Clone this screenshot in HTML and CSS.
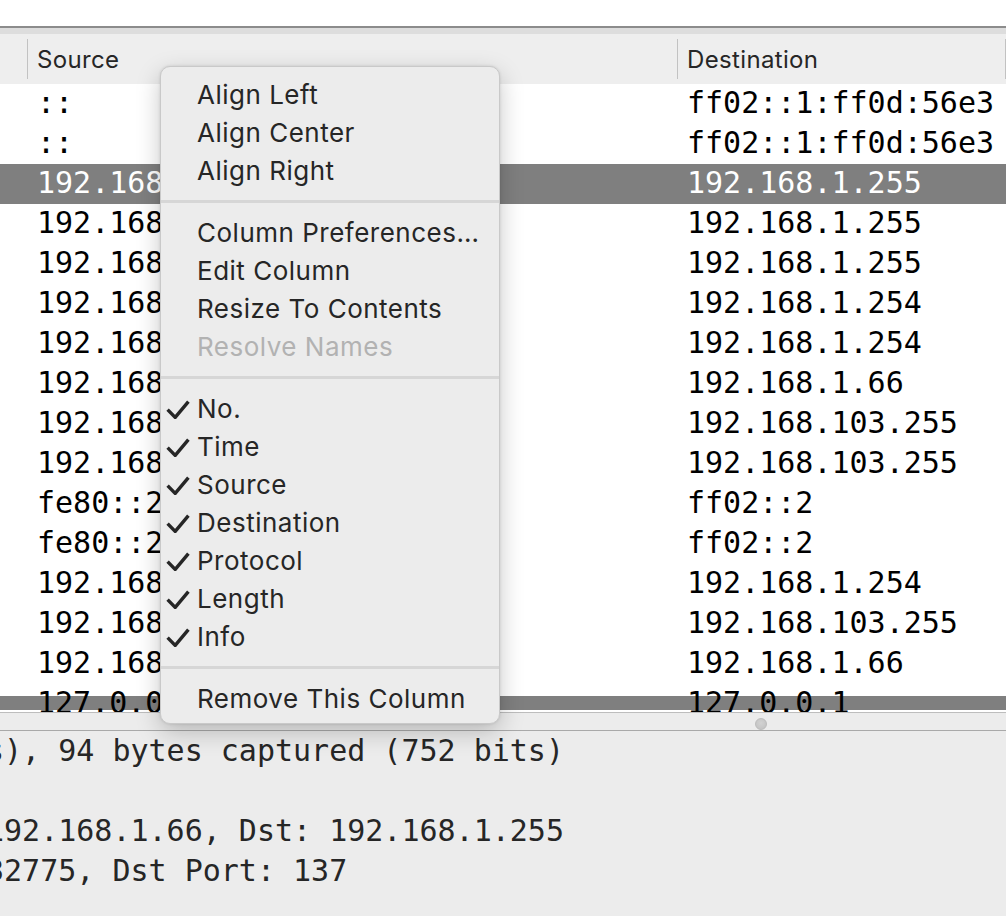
FILE: index.html
```html
<!DOCTYPE html>
<html>
<head>
<meta charset="utf-8">
<link rel="stylesheet" href="styles.css">
</head>
<body>
<div class="app">
  <div class="topspace"></div>
  <div class="packet-list">
    <div class="list-top"></div>
    <div class="header">
      <div class="hcell c0"></div>
      <div class="hsep"></div>
      <div class="hcell src">Source</div>
      <div class="hsep"></div>
      <div class="hcell dst">Destination</div>
      <div class="hsep"></div>
    </div>
    <div class="rows">
      <div class="row"><span class="c0"></span><span class="src">::</span><span class="dst">ff02::1:ff0d:56e3</span></div>
      <div class="row"><span class="c0"></span><span class="src">::</span><span class="dst">ff02::1:ff0d:56e3</span></div>
      <div class="row selected"><span class="c0"></span><span class="src">192.168.1.66</span><span class="dst">192.168.1.255</span></div>
      <div class="row"><span class="c0"></span><span class="src">192.168.1.66</span><span class="dst">192.168.1.255</span></div>
      <div class="row"><span class="c0"></span><span class="src">192.168.1.66</span><span class="dst">192.168.1.255</span></div>
      <div class="row"><span class="c0"></span><span class="src">192.168.1.66</span><span class="dst">192.168.1.254</span></div>
      <div class="row"><span class="c0"></span><span class="src">192.168.1.66</span><span class="dst">192.168.1.254</span></div>
      <div class="row"><span class="c0"></span><span class="src">192.168.1.254</span><span class="dst">192.168.1.66</span></div>
      <div class="row"><span class="c0"></span><span class="src">192.168.103.1</span><span class="dst">192.168.103.255</span></div>
      <div class="row"><span class="c0"></span><span class="src">192.168.103.1</span><span class="dst">192.168.103.255</span></div>
      <div class="row"><span class="c0"></span><span class="src">fe80::2</span><span class="dst">ff02::2</span></div>
      <div class="row"><span class="c0"></span><span class="src">fe80::2</span><span class="dst">ff02::2</span></div>
      <div class="row"><span class="c0"></span><span class="src">192.168.1.66</span><span class="dst">192.168.1.254</span></div>
      <div class="row"><span class="c0"></span><span class="src">192.168.103.1</span><span class="dst">192.168.103.255</span></div>
      <div class="row"><span class="c0"></span><span class="src">192.168.1.254</span><span class="dst">192.168.1.66</span></div>
      <div class="row last"><span class="c0"></span><span class="src">127.0.0.1</span><span class="dst">127.0.0.1</span></div>
    </div>
  </div>
  <div class="splitter"><span class="handle"></span></div>
  <div class="details">
    <div class="dlines">
      <div class="dline">s), 94 bytes captured (752 bits)</div>
      <div class="dline">&nbsp;</div>
      <div class="dline">192.168.1.66, Dst: 192.168.1.255</div>
      <div class="dline">32775, Dst Port: 137</div>
    </div>
  </div>

  <div class="menu">
    <div class="item"><span class="gutter"></span>Align Left</div>
    <div class="item"><span class="gutter"></span>Align Center</div>
    <div class="item"><span class="gutter"></span>Align Right</div>
    <div class="sep"></div>
    <div class="item"><span class="gutter"></span>Column Preferences…</div>
    <div class="item"><span class="gutter"></span>Edit Column</div>
    <div class="item"><span class="gutter"></span>Resize To Contents</div>
    <div class="item disabled"><span class="gutter"></span>Resolve Names</div>
    <div class="sep"></div>
    <div class="item"><span class="gutter"><svg class="check" width="24" height="19" viewBox="0 0 24 19"><path d="M1.6 9.6 L9.2 17.4 L22.4 1.6" /></svg></span>No.</div>
    <div class="item"><span class="gutter"><svg class="check" width="24" height="19" viewBox="0 0 24 19"><path d="M1.6 9.6 L9.2 17.4 L22.4 1.6" /></svg></span>Time</div>
    <div class="item"><span class="gutter"><svg class="check" width="24" height="19" viewBox="0 0 24 19"><path d="M1.6 9.6 L9.2 17.4 L22.4 1.6" /></svg></span>Source</div>
    <div class="item"><span class="gutter"><svg class="check" width="24" height="19" viewBox="0 0 24 19"><path d="M1.6 9.6 L9.2 17.4 L22.4 1.6" /></svg></span>Destination</div>
    <div class="item"><span class="gutter"><svg class="check" width="24" height="19" viewBox="0 0 24 19"><path d="M1.6 9.6 L9.2 17.4 L22.4 1.6" /></svg></span>Protocol</div>
    <div class="item"><span class="gutter"><svg class="check" width="24" height="19" viewBox="0 0 24 19"><path d="M1.6 9.6 L9.2 17.4 L22.4 1.6" /></svg></span>Length</div>
    <div class="item"><span class="gutter"><svg class="check" width="24" height="19" viewBox="0 0 24 19"><path d="M1.6 9.6 L9.2 17.4 L22.4 1.6" /></svg></span>Info</div>
    <div class="sep"></div>
    <div class="item"><span class="gutter"></span>Remove This Column</div>
  </div>
</div>
</body>
</html>
```

FILE: styles.css
```css
* { box-sizing: border-box; }
html, body {
  margin: 0;
  padding: 0;
  background: #ffffff;
}
body {
  width: 1006px;
  height: 916px;
  overflow: hidden;
}
.app {
  position: relative;
  width: 1006px;
  height: 916px;
  overflow: hidden;
  display: flex;
  flex-direction: column;
}
.topspace {
  height: 26px;
  background: #ffffff;
  flex: none;
}
.packet-list {
  flex: none;
}
.list-top {
  height: 8px;
  border-top: 2px solid #8c8c8c;
  background: #dddddd;
}
.header {
  height: 50px;
  background: #eeeeee;
  display: flex;
  align-items: center;
  font-family: "Inter", "Liberation Sans", sans-serif;
  font-size: 24px;
  letter-spacing: 0.35px;
  color: #262626;
}
.hcell {
  white-space: nowrap;
  overflow: hidden;
}
.hsep {
  width: 1px;
  height: 40px;
  background: #c2c2c2;
  flex: none;
}
.header .c0 { width: 27px; flex: none; }
.header .src { width: 649px; padding-left: 9px; flex: none; }
.header .dst { width: 327px; padding-left: 9px; flex: none; }

.rows {
  height: 628px;
  overflow: hidden;
  background: #ffffff;
  font-family: "DejaVu Sans Mono", "Liberation Mono", monospace;
  font-size: 30px;
  color: #000000;
}
.row {
  height: 40px;
  line-height: 37px;
  display: flex;
  white-space: nowrap;
}
.row .c0 { width: 27px; flex: none; }
.row .src { width: 650px; padding-left: 10px; flex: none; overflow: hidden; }
.row .dst { width: 329px; padding-left: 10px; flex: none; overflow: hidden; }
.row.selected {
  background: #7f7f7f;
  color: #ffffff;
}
.row.last {
  background: linear-gradient(to bottom, #ffffff 0, #ffffff 12px, #7f7f7f 12px, #7f7f7f 26px, #ffffff 26px);
}

.splitter {
  flex: none;
  height: 19px;
  border-top: 1px solid #bdbdbd;
  border-bottom: 1px solid #a9a9a9;
  background: #ececec;
  padding-left: 755px;
  padding-top: 5px;
}
.handle {
  display: block;
  width: 12px;
  height: 12px;
  border-radius: 50%;
  background: radial-gradient(circle at 50% 40%, #d2d2d2, #c0c0c0);
  border: 1px solid #bcbcbc;
}

.details {
  flex: 1;
  background: #ececec;
  overflow: hidden;
  font-family: "DejaVu Sans Mono", "Liberation Mono", monospace;
  font-size: 30px;
  color: #262626;
}
.dlines {
  margin-left: -14px;
}
.dline {
  height: 40px;
  line-height: 40px;
  white-space: nowrap;
}

.menu {
  position: absolute;
  left: 160px;
  top: 66px;
  width: 340px;
  height: 658px;
  background: #ececec;
  border: 1px solid #c9c9c9;
  border-radius: 10px;
  box-shadow: 0 8px 24px rgba(0, 0, 0, 0.22), 0 0 3px rgba(0, 0, 0, 0.12);
  padding-top: 8px;
  font-family: "Inter", "Liberation Sans", sans-serif;
  font-size: 26px;
  letter-spacing: 0.5px;
  color: #262626;
}
.item {
  height: 38px;
  display: flex;
  align-items: center;
  white-space: nowrap;
}
.item.disabled {
  color: #b2b2b2;
}
.gutter {
  width: 36px;
  height: 38px;
  flex: none;
  display: flex;
  align-items: center;
  padding-left: 5px;
  padding-top: 3px;
}
.check path {
  fill: none;
  stroke: #262626;
  stroke-width: 3.4;
  stroke-linecap: butt;
  stroke-linejoin: miter;
}
.sep {
  height: 24px;
  display: flex;
  align-items: center;
}
.sep::before {
  content: "";
  display: block;
  width: 100%;
  height: 3px;
  background: #d6d6d6;
}
```
